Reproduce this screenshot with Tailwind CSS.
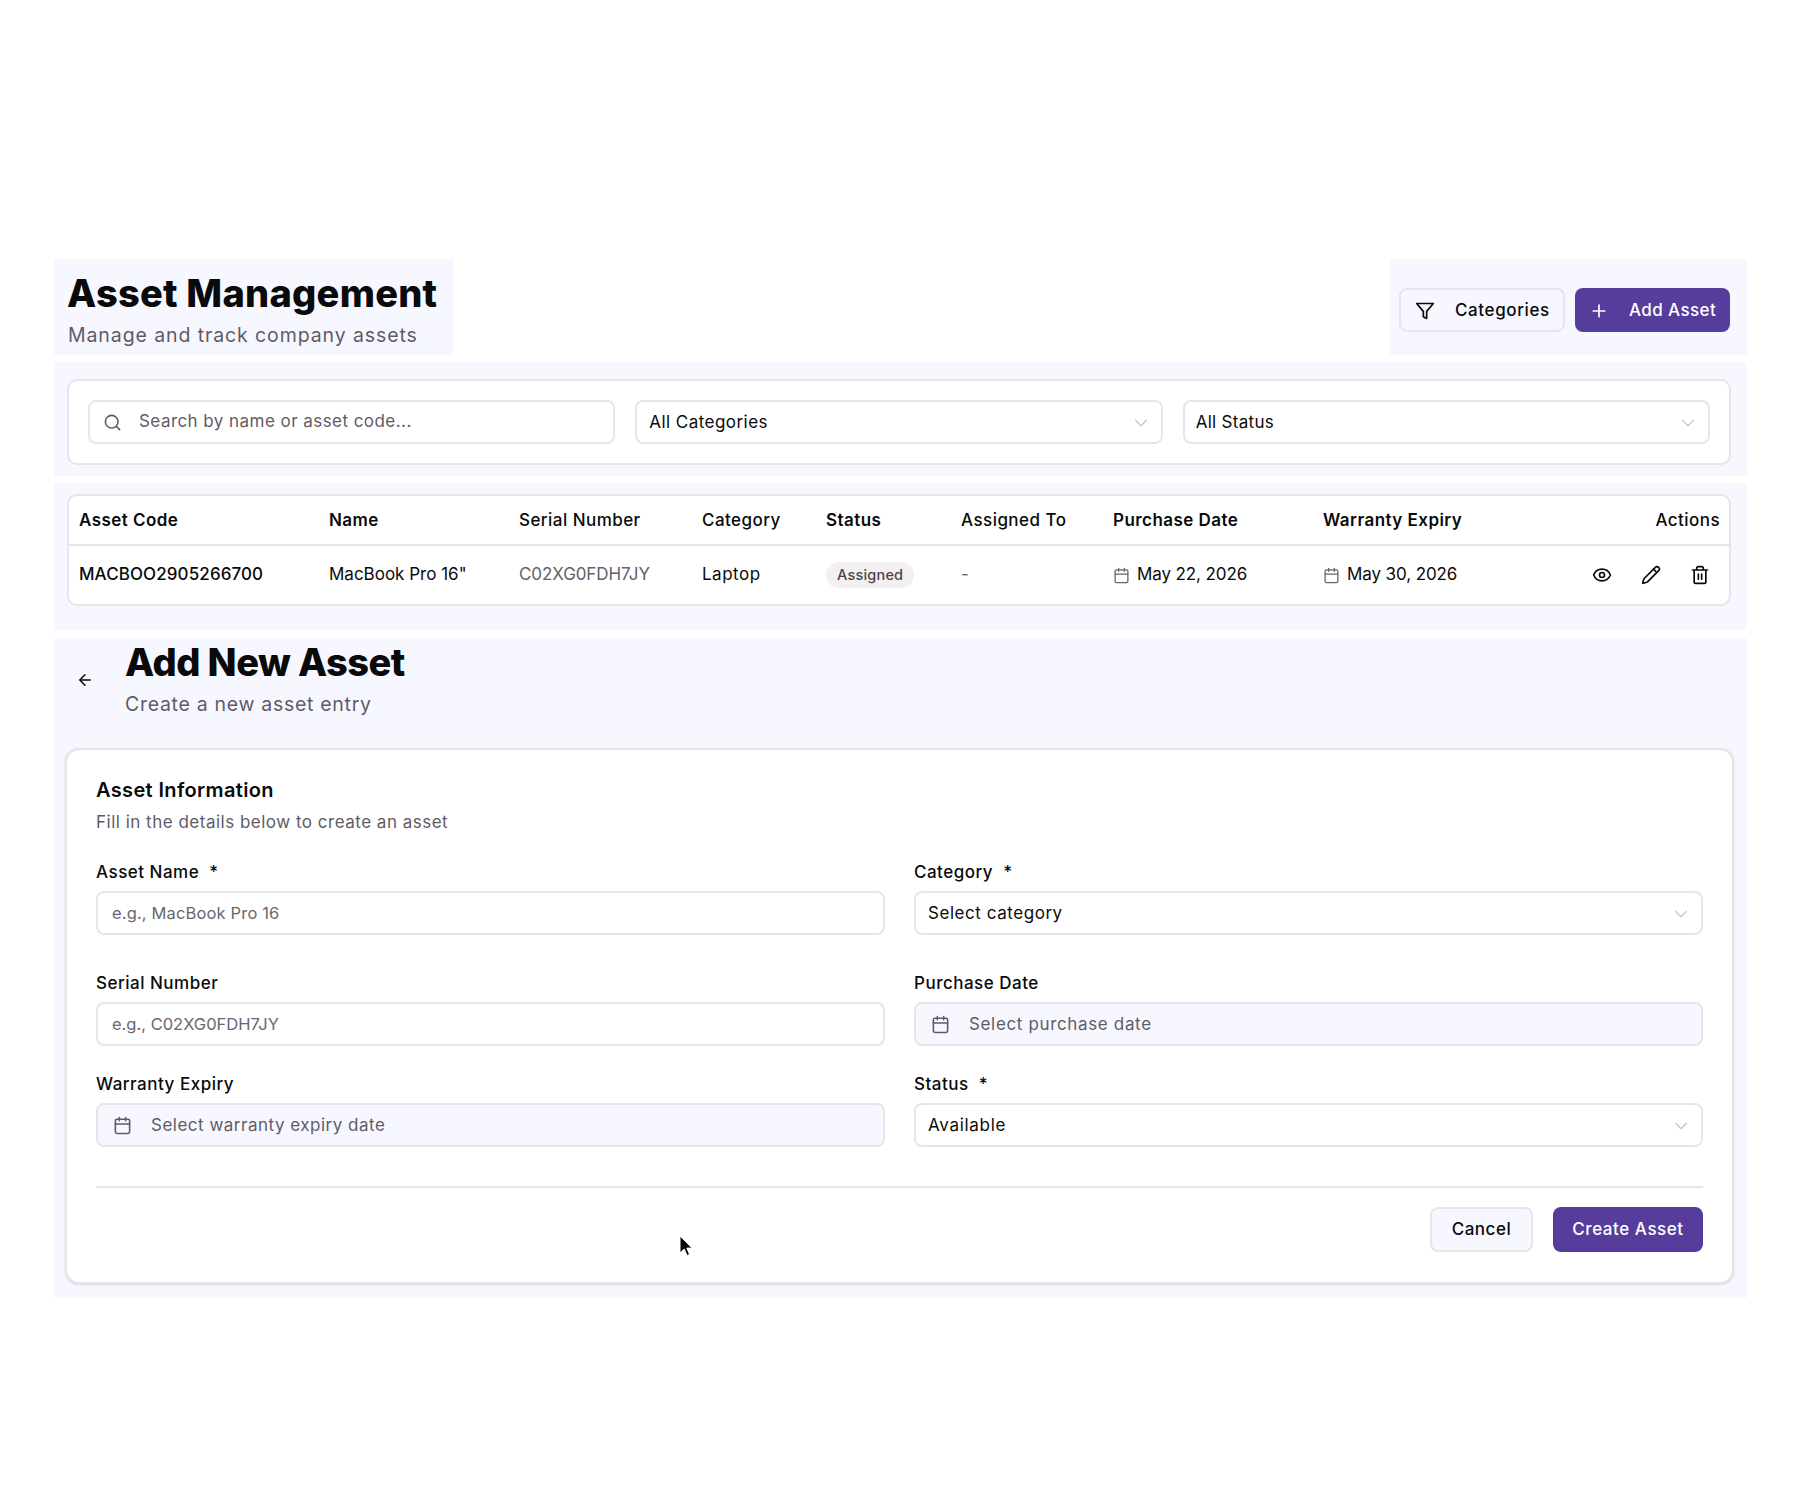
<!doctype html>
<html>
<head>
<meta charset="utf-8">
<script src="https://cdn.jsdelivr.net/npm/@tailwindcss/browser@4"></script>
</head>
<body class="bg-white font-['Inter',sans-serif] text-[#0a0a0a]">
<div class="w-[1800px] h-[1500px] pt-[259px] pl-[54px] pr-[53px] relative overflow-hidden">

  <header class="flex justify-between h-[96px] mb-[7px]">
    <div class="bg-[#f7f8ff] w-[400px] pl-[13px] pr-[14px] pt-[12px]">
      <h1 class="text-[38px] leading-[44px] font-extrabold tracking-[0.25px]">Asset Management</h1>
      <p class="text-[19.5px] leading-[26px] mt-[7px] pl-[1px] text-[#5f5b66] tracking-[0.9px]">Manage and track company assets</p>
    </div>
    <div class="bg-[#f7f8ff] w-[357px] pl-[9px] pr-[17px] pt-[29px] flex gap-[10px] items-start">
      <button class="h-[44px] w-[166px] flex items-center pl-[14px] pt-[1px] gap-[20px] border-2 border-[#e6e6ea] rounded-[8px] text-[17px] font-medium tracking-[0.6px]">
        <svg class="w-[20px] h-[20px]" viewBox="0 0 24 24" fill="none" stroke="currentColor" stroke-width="2" stroke-linecap="round" stroke-linejoin="round"><polygon points="22 3 2 3 10 12.46 10 19 14 21 14 12.46 22 3"/></svg>
        Categories
      </button>
      <button class="h-[44px] w-[155px] flex items-center pl-[14px] pt-[1px] gap-[20px] rounded-[8px] bg-[#563d9c] text-white text-[17px] font-medium tracking-[0.4px]">
        <svg class="w-[20px] h-[20px]" viewBox="0 0 24 24" fill="none" stroke="currentColor" stroke-width="2" stroke-linecap="round"><path d="M5 12h14M12 5v14"/></svg>
        Add Asset
      </button>
    </div>
  </header>

  <section class="bg-[#f7f8ff] h-[114px] pt-[17px] pl-[13px] pr-[16px] mb-[7px]">
    <div class="bg-white border-2 border-[#e6e6ea] rounded-[10px] h-[86px] px-[19px] grid grid-cols-3 items-center gap-[20px]">
      <div class="h-[44px] border-2 border-[#e6e6ea] rounded-[8px] flex items-center pl-[13px] gap-[17px] text-[17px] text-[#5f5b66] tracking-[0.45px]">
        <svg class="w-[19px] h-[19px]" viewBox="0 0 24 24" fill="none" stroke="currentColor" stroke-width="2" stroke-linecap="round"><circle cx="11" cy="11" r="8"/><path d="m21 21-4.3-4.3"/></svg>
        Search by name or asset code...
      </div>
      <div class="h-[44px] border-2 border-[#e6e6ea] rounded-[8px] flex items-center justify-between pl-[12px] pr-[9px] pt-[1px] text-[17px] tracking-[0.45px]">
        All Categories
        <svg class="w-[22px] h-[22px] text-[#c9c9ce]" viewBox="0 0 24 24" fill="none" stroke="currentColor" stroke-width="1.5" stroke-linecap="round" stroke-linejoin="round"><path d="m6 9 6 6 6-6"/></svg>
      </div>
      <div class="h-[44px] border-2 border-[#e6e6ea] rounded-[8px] flex items-center justify-between pl-[11px] pr-[9px] pt-[1px] text-[17px] tracking-[0.3px]">
        All Status
        <svg class="w-[22px] h-[22px] text-[#c9c9ce]" viewBox="0 0 24 24" fill="none" stroke="currentColor" stroke-width="1.5" stroke-linecap="round" stroke-linejoin="round"><path d="m6 9 6 6 6-6"/></svg>
      </div>
    </div>
  </section>

  <section class="bg-[#f7f8ff] h-[147px] pt-[11px] pl-[13px] pr-[16px] mb-[8px]">
    <div class="bg-white border-2 border-[#e6e6ea] rounded-[10px] h-[112px] overflow-hidden">
      <table class="w-full table-fixed text-[17px] text-left">
        <thead>
          <tr class="h-[49px] border-b-2 border-[#e6e6ea] tracking-[0.45px]">
            <th class="w-[250px] pl-[10px] pt-[2px] font-semibold">Asset Code</th>
            <th class="w-[191px] pl-[10px] pt-[2px] font-semibold">Name</th>
            <th class="w-[183px] pl-[9px] pt-[2px] font-medium">Serial Number</th>
            <th class="w-[124px] pl-[9px] pt-[2px] font-medium">Category</th>
            <th class="w-[135px] pl-[9px] pt-[2px] font-semibold">Status</th>
            <th class="w-[152px] pl-[9px] pt-[2px] font-medium">Assigned To</th>
            <th class="w-[210px] pl-[9px] pt-[2px] font-semibold">Purchase Date</th>
            <th class="pl-[9px] pt-[2px] font-semibold">Warranty Expiry</th>
            <th class="w-[150px] pr-[9px] pt-[2px] font-medium text-right">Actions</th>
          </tr>
        </thead>
        <tbody>
          <tr class="h-[59px]">
            <td class="pl-[10px] font-medium tracking-[0.1px]">MACBOO2905266700</td>
            <td class="pl-[10px]">MacBook Pro 16"</td>
            <td class="pl-[9px] text-[#65616b] tracking-[-0.1px]">C02XG0FDH7JY</td>
            <td class="pl-[9px] tracking-[0.5px]">Laptop</td>
            <td class="pl-[9px]"><span class="inline-block bg-[#f2f0f2] text-[#4d4248] rounded-full px-[11px] leading-[26px] text-[14.5px] font-medium tracking-[0.2px]">Assigned</span></td>
            <td class="pl-[9px] text-[#65616b]">-</td>
            <td class="pl-[9px]">
              <div class="flex items-center gap-[7px] tracking-[-0.1px]">
                <svg class="w-[17px] h-[17px] text-[#666] shrink-0" viewBox="0 0 24 24" fill="none" stroke="currentColor" stroke-width="1.8" stroke-linecap="round" stroke-linejoin="round"><path d="M8 2v4M16 2v4M3 10h18"/><rect width="18" height="18" x="3" y="4" rx="2"/></svg>
                May 22, 2026
              </div>
            </td>
            <td class="pl-[9px]">
              <div class="flex items-center gap-[7px] tracking-[-0.1px]">
                <svg class="w-[17px] h-[17px] text-[#666] shrink-0" viewBox="0 0 24 24" fill="none" stroke="currentColor" stroke-width="1.8" stroke-linecap="round" stroke-linejoin="round"><path d="M8 2v4M16 2v4M3 10h18"/><rect width="18" height="18" x="3" y="4" rx="2"/></svg>
                May 30, 2026
              </div>
            </td>
            <td class="pr-[19px]">
              <div class="flex justify-end items-center gap-[29px]">
                <svg class="w-[20px] h-[20px]" viewBox="0 0 24 24" fill="none" stroke="currentColor" stroke-width="2" stroke-linecap="round" stroke-linejoin="round"><path d="M2.062 12.348a1 1 0 0 1 0-.696 10.75 10.75 0 0 1 19.876 0 1 1 0 0 1 0 .696 10.75 10.75 0 0 1-19.876 0"/><circle cx="12" cy="12" r="3"/></svg>
                <svg class="w-[20px] h-[20px]" viewBox="0 0 24 24" fill="none" stroke="currentColor" stroke-width="2" stroke-linecap="round" stroke-linejoin="round"><path d="M21.174 6.812a1 1 0 0 0-3.986-3.987L3.842 16.174a2 2 0 0 0-.5.83l-1.321 4.352a.5.5 0 0 0 .623.622l4.353-1.32a2 2 0 0 0 .83-.497z"/><path d="m15 5 4 4"/></svg>
                <svg class="w-[20px] h-[20px]" viewBox="0 0 24 24" fill="none" stroke="currentColor" stroke-width="2" stroke-linecap="round" stroke-linejoin="round"><path d="M3 6h18M19 6v14c0 1-1 2-2 2H7c-1 0-2-1-2-2V6M8 6V4c0-1 1-2 2-2h4c1 0 2 1 2 2v2M10 11v6M14 11v6"/></svg>
              </div>
            </td>
          </tr>
        </tbody>
      </table>
    </div>
  </section>

  <section class="bg-[#f7f8ff] h-[660px] pl-[11px] pr-[13px]">
    <div class="flex h-[110px]">
      <div class="w-[60px] pl-[11px] pt-[33px]">
        <svg class="w-[18px] h-[18px]" viewBox="0 0 24 24" fill="none" stroke="currentColor" stroke-width="2" stroke-linecap="round" stroke-linejoin="round"><path d="m12 19-7-7 7-7M19 12H5"/></svg>
      </div>
      <div class="pt-[2px]">
        <h2 class="text-[38px] leading-[44px] font-extrabold tracking-[-0.55px]">Add New Asset</h2>
        <p class="text-[19.5px] leading-[26px] mt-[7px] text-[#5f5b66] tracking-[0.7px]">Create a new asset entry</p>
      </div>
    </div>
    <div class="bg-white border-2 border-[#e4e4e8] rounded-[14px] shadow-sm h-[536px] px-[29px] pt-[26px]">
      <h3 class="text-[20px] leading-[28px] font-semibold tracking-[0.35px]">Asset Information</h3>
      <p class="text-[17px] leading-[24px] mt-[6px] text-[#5f5b66] tracking-[0.5px]">Fill in the details below to create an asset</p>

      <div class="grid grid-cols-2 gap-x-[29px] mt-[26px] tracking-[0.5px]">
        <div class="h-[111px]">
          <label class="block text-[17px] leading-[24px] font-medium mb-[7px]">Asset Name <span class="ml-[5px]">*</span></label>
          <div class="h-[44px] border-2 border-[#e6e6ea] rounded-[8px] flex items-center px-[14px] text-[16.5px] text-[#6a6670] tracking-[0.15px]">e.g., MacBook Pro 16</div>
        </div>
        <div class="h-[111px]">
          <label class="block text-[17px] leading-[24px] font-medium mb-[7px]">Category <span class="ml-[5px]">*</span></label>
          <div class="h-[44px] border-2 border-[#e6e6ea] rounded-[8px] flex items-center justify-between pl-[12px] pr-[9px] pt-[2px] text-[17px] tracking-[0.55px]">
            Select category
            <svg class="w-[22px] h-[22px] text-[#c9c9ce]" viewBox="0 0 24 24" fill="none" stroke="currentColor" stroke-width="1.5" stroke-linecap="round" stroke-linejoin="round"><path d="m6 9 6 6 6-6"/></svg>
          </div>
        </div>
        <div class="h-[101px]">
          <label class="block text-[17px] leading-[24px] font-medium mb-[7px]">Serial Number</label>
          <div class="h-[44px] border-2 border-[#e6e6ea] rounded-[8px] flex items-center px-[14px] text-[16.5px] text-[#6a6670] tracking-[0px]">e.g., C02XG0FDH7JY</div>
        </div>
        <div class="h-[101px]">
          <label class="block text-[17px] leading-[24px] font-medium mb-[7px]">Purchase Date</label>
          <div class="h-[44px] border-2 border-[#e6e6ea] bg-[#f7f8ff] rounded-[8px] flex items-center pl-[15px] gap-[19px] pt-[1px] text-[17px] text-[#5f5b66] tracking-[0.65px]">
            <svg class="w-[19px] h-[19px] shrink-0" viewBox="0 0 24 24" fill="none" stroke="currentColor" stroke-width="2" stroke-linecap="round" stroke-linejoin="round"><path d="M8 2v4M16 2v4M3 10h18"/><rect width="18" height="18" x="3" y="4" rx="2"/></svg>
            Select purchase date
          </div>
        </div>
        <div>
          <label class="block text-[17px] leading-[24px] font-medium mb-[7px]">Warranty Expiry</label>
          <div class="h-[44px] border-2 border-[#e6e6ea] bg-[#f7f8ff] rounded-[8px] flex items-center pl-[15px] gap-[19px] pt-[1px] text-[17px] text-[#5f5b66]">
            <svg class="w-[19px] h-[19px] shrink-0" viewBox="0 0 24 24" fill="none" stroke="currentColor" stroke-width="2" stroke-linecap="round" stroke-linejoin="round"><path d="M8 2v4M16 2v4M3 10h18"/><rect width="18" height="18" x="3" y="4" rx="2"/></svg>
            Select warranty expiry date
          </div>
        </div>
        <div>
          <label class="block text-[17px] leading-[24px] font-medium mb-[7px]">Status <span class="ml-[5px]">*</span></label>
          <div class="h-[44px] border-2 border-[#e6e6ea] rounded-[8px] flex items-center justify-between pl-[12px] pr-[9px] pt-[2px] text-[17px] tracking-[0.7px]">
            Available
            <svg class="w-[22px] h-[22px] text-[#c9c9ce]" viewBox="0 0 24 24" fill="none" stroke="currentColor" stroke-width="1.5" stroke-linecap="round" stroke-linejoin="round"><path d="m6 9 6 6 6-6"/></svg>
          </div>
        </div>
      </div>

      <div class="border-t-2 border-[#e6e6ea] mt-[39px] pt-[19px] flex justify-end gap-[20px] tracking-[0.55px]">
        <button class="h-[45px] w-[103px] border-2 border-[#e6e6ea] bg-[#f7f8ff] rounded-[8px] text-[17px] font-medium">Cancel</button>
        <button class="h-[45px] w-[150px] bg-[#563d9c] text-white rounded-[8px] text-[17px] font-medium">Create Asset</button>
      </div>
    </div>
  </section>

  <svg class="absolute left-[678px] top-[1234px] w-[16px] h-[24px]" viewBox="0 0 16 24"><path d="M2 2v17l4.2-4 2.8 6.5 2.6-1.1-2.8-6.3H14z" fill="#000" stroke="#fff" stroke-width="1"/></svg>
</div>
</body>
</html>
